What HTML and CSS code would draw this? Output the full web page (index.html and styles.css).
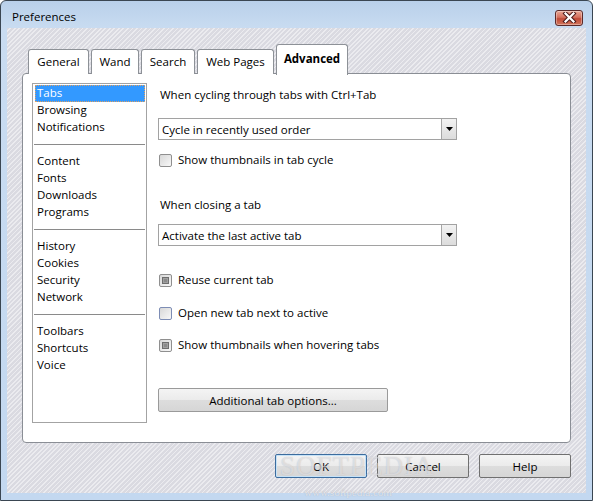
FILE: index.html
```html
<!DOCTYPE html>
<html>
<head>
<meta charset="utf-8">
<title>Preferences</title>
<link rel="stylesheet" href="styles.css">
</head>
<body>

<div class="window">

    <div class="titlebar">
        <span class="title">Preferences</span>
        <button class="close" title="Close">
            <svg width="15" height="11" viewBox="0 0 15 11">
                <path d="M3.5 1.5 L11.5 9.5 M11.5 1.5 L3.5 9.5" stroke="#4a1b1b" stroke-width="4.2" stroke-linecap="square"/>
                <path d="M3.5 1.5 L11.5 9.5 M11.5 1.5 L3.5 9.5" stroke="#ffffff" stroke-width="2.2" stroke-linecap="square"/>
            </svg>
        </button>
    </div>

    <div class="client">

        <div class="tabs">
            <div class="tab">General</div>
            <div class="tab">Wand</div>
            <div class="tab">Search</div>
            <div class="tab">Web Pages</div>
            <div class="tab active">Advanced</div>
        </div>

        <div class="panel">

            <ul class="sections">
                <li class="selected">Tabs</li>
                <li>Browsing</li>
                <li>Notifications</li>
                <li class="sep"></li>
                <li>Content</li>
                <li>Fonts</li>
                <li>Downloads</li>
                <li>Programs</li>
                <li class="sep"></li>
                <li>History</li>
                <li>Cookies</li>
                <li>Security</li>
                <li>Network</li>
                <li class="sep"></li>
                <li>Toolbars</li>
                <li>Shortcuts</li>
                <li>Voice</li>
            </ul>

            <div class="page">
                <div class="label first">When cycling through tabs with Ctrl+Tab</div>
                <div class="combo combo-1">
                    <span class="combo-text">Cycle in recently used order</span>
                    <span class="combo-btn"><svg width="7" height="4" viewBox="0 0 7 4"><polygon points="0,0 7,0 3.5,4" fill="#000"/></svg></span>
                </div>
                <div class="check check-1"><span class="box"></span>Show thumbnails in tab cycle</div>

                <div class="label second">When closing a tab</div>
                <div class="combo combo-2">
                    <span class="combo-text">Activate the last active tab</span>
                    <span class="combo-btn"><svg width="7" height="4" viewBox="0 0 7 4"><polygon points="0,0 7,0 3.5,4" fill="#000"/></svg></span>
                </div>

                <div class="check check-2"><span class="box on"></span>Reuse current tab</div>
                <div class="check check-3"><span class="box hover"></span>Open new tab next to active</div>
                <div class="check check-4"><span class="box on"></span>Show thumbnails when hovering tabs</div>

                <button class="btn wide">Additional tab options...</button>
            </div>

        </div>

        <div class="actions">
            <button class="btn default">OK</button>
            <button class="btn">Cancel</button>
            <button class="btn">Help</button>
        </div>

        <div class="watermark">SOFTPEDIA<span class="wm-url">www.softpedia.com</span></div>

    </div>

</div>

</body>
</html>
```

FILE: styles.css
```css
body {
    margin: 0;
    font-family: "Open Sans", sans-serif;
    font-size: 11.5px;
    color: #000;
    background: #fff;
}

.window {
    box-sizing: border-box;
    width: 593px;
    height: 501px;
    border: 1px solid #3a4652;
    border-radius: 6px 6px 0 0;
    padding: 0 6px 7px 6px;
    background: linear-gradient(#b9d0ea, #c9dcf1 28px, #c3d8f0);
    display: flex;
    flex-direction: column;
}

/* title bar */
.titlebar {
    height: 27px;
    display: flex;
    align-items: center;
    padding: 0 3px 0 5px;
    box-sizing: border-box;
}

.title {
    flex-grow: 1;
    font-size: 11.5px;
    margin-top: 4px;
}

.close {
    width: 28px;
    height: 16px;
    margin-top: 6px;
    padding: 0;
    border: 1px solid #5b2a2a;
    border-radius: 3px;
    background: linear-gradient(#e9a795, #d4705e 45%, #c04a38 55%, #d2765c);
    display: flex;
    align-items: center;
    justify-content: center;
    box-shadow: inset 0 0 0 1px rgba(255,255,255,.35);
}

/* client area */
.client {
    position: relative;
    flex-grow: 1;
    padding: 16px 15px 0 15px;
    background: repeating-linear-gradient(135deg, #dadae1 0, #dadae1 2px, #ebebef 2px, #ebebef 3.2px);
}

.tabs {
    display: flex;
    align-items: flex-end;
    gap: 2px;
    height: 30px;
    margin: 0 0 -1px 6px;
    position: relative;
    z-index: 1;
}

.tab {
    height: 25px;
    line-height: 24px;
    padding: 0;
    background: #fff;
    border: 1px solid #8d9197;
    border-bottom: none;
    border-radius: 3px 3px 0 0;
    box-sizing: border-box;
    text-align: center;
}

.tab:nth-child(1) { width: 61px; }
.tab:nth-child(2) { width: 48px; }
.tab:nth-child(3) { width: 54px; }
.tab:nth-child(4) { width: 77px; }

.tab.active {
    width: 72px;
    height: 31px;
    line-height: 28px;
    font-weight: bold;
    margin-bottom: -1px;
    position: relative;
}

.panel {
    box-sizing: border-box;
    height: 370px;
    background: #fff;
    border: 1px solid #8a8e95;
    border-radius: 4px;
    padding: 9px 0 0 9px;
    display: flex;
}

/* section list */
.sections {
    list-style: none;
    margin: 0;
    padding: 1px;
    box-sizing: border-box;
    width: 115px;
    height: 340px;
    border: 1px solid #a3a3a3;
}

.sections li {
    height: 17px;
    line-height: 16px;
    padding-left: 3px;
    white-space: nowrap;
    box-sizing: border-box;
}

.sections li.selected {
    background: #3399ff;
    color: #fff;
    outline: 1px dotted #e0a060;
    outline-offset: -1px;
    margin-left: 1px;
    padding-left: 2px;
}

.sections li.sep {
    padding: 8px 0 0 0;
}

.sections li.sep:after {
    content: "";
    display: block;
    height: 1px;
    background: #8a8a8a;
}

/* page */
.page {
    margin-left: 11px;
    display: flex;
    flex-direction: column;
    align-items: flex-start;
}

.label {
    height: 16px;
    line-height: 16px;
    padding-left: 2px;
}

.label.first { margin-top: 4px; }
.label.second { margin-top: 29px; }

.combo {
    box-sizing: border-box;
    width: 299px;
    height: 22px;
    border: 1px solid #a2a2a2;
    display: flex;
    align-items: center;
}

.combo-1 { margin-top: 15px; }
.combo-2 { margin-top: 11px; }

.combo-text {
    flex-grow: 1;
    padding-left: 3px;
}

.combo-btn {
    width: 15px;
    height: 20px;
    box-sizing: border-box;
    border-left: 1px solid #a6a6a6;
    background: linear-gradient(#f2f2f2, #dcdcdc);
    display: flex;
    align-items: center;
    justify-content: center;
}

.check {
    height: 16px;
    line-height: 16px;
    display: flex;
    align-items: center;
    padding-left: 1px;
}

.check-1 { margin-top: 12px; }
.check-2 { margin-top: 26px; }
.check-3 { margin-top: 17px; }
.check-4 { margin-top: 16px; }

.box {
    box-sizing: border-box;
    width: 13px;
    height: 13px;
    margin-right: 6px;
    border: 1px solid #8f8f8f;
    border-radius: 2px;
    background: linear-gradient(135deg, #d8d8d8, #f8f8f8);
    display: flex;
    align-items: center;
    justify-content: center;
}

.box.hover {
    border-color: #7d8db5;
}

.box.on:before {
    content: "";
    width: 7px;
    height: 7px;
    box-sizing: border-box;
    background: #8a8a8a;
    border: 1px solid #6e6e6e;
    box-shadow: inset 0 0 0 1px #a0a0a0;
}

/* buttons */
.btn {
    box-sizing: border-box;
    width: 92px;
    height: 24px;
    padding: 0;
    font-family: inherit;
    font-size: 11.5px;
    color: #000;
    border: 1px solid #707070;
    border-radius: 2px;
    background: linear-gradient(#f4f4f4, #ebebeb 50%, #dddddd 51%, #d6d6d6);
}

.btn.wide {
    width: 230px;
    margin-top: 35px;
    border-color: #9a9a9a;
}

.btn.default {
    border-color: #3c6c9e;
    box-shadow: inset 0 0 0 1px #c6e2f7;
}

.actions {
    display: flex;
    justify-content: flex-end;
    gap: 10px;
    margin-top: 11px;
}

.watermark {
    position: absolute;
    left: 273px;
    top: 423px;
    font-family: "Liberation Serif", serif;
    font-size: 27px;
    letter-spacing: 1px;
    color: rgba(255,255,255,.5);
    text-shadow: 0 0 1px rgba(120,120,130,.45);
    pointer-events: none;
}

.wm-url {
    display: block;
    font-size: 11px;
    letter-spacing: 0;
    margin: 4px 0 0 24px;
    color: rgba(255,255,255,.6);
}
```
